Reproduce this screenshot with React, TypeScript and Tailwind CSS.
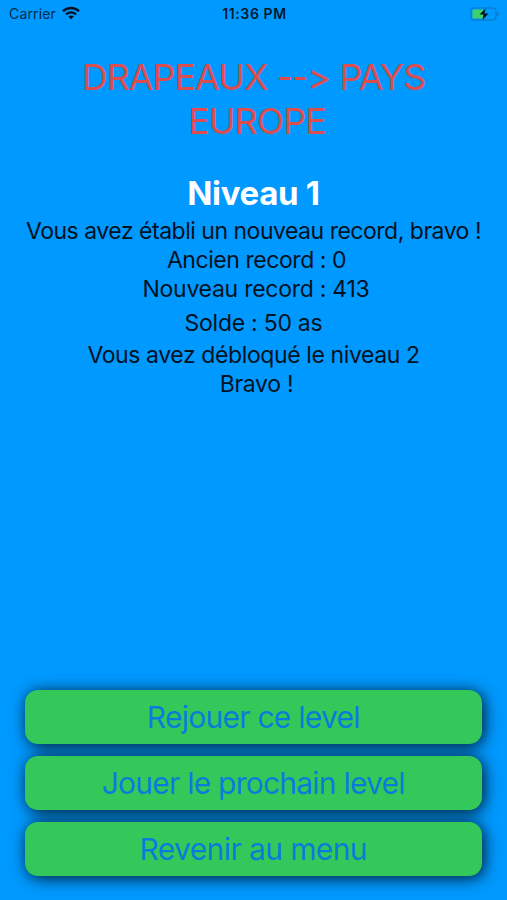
import React from 'react';

const recordLines = [
  { text: 'Vous avez établi un nouveau record, bravo !', className: 'h-[29px] tracking-[-0.49px]' },
  { text: 'Ancien record : 0', className: 'h-[29px] pl-[6px] tracking-[-0.44px]' },
  { text: 'Nouveau record : 413', className: 'h-[34px] pl-[5px] tracking-[-0.26px]' },
  { text: 'Solde : 50 as', className: 'h-[32px] tracking-[-0.26px]' },
  { text: 'Vous avez débloqué le niveau 2', className: 'h-[29px] tracking-[-0.4px]' },
  { text: 'Bravo !', className: 'h-[29px] pl-[6px] tracking-[-0.3px]' },
];

const actions = [
  { label: 'Rejouer ce level', className: 'tracking-[-0.75px]' },
  { label: 'Jouer le prochain level', className: 'tracking-[-0.77px]' },
  { label: 'Revenir au menu', className: 'tracking-[-0.6px]' },
];

const StatusBar: React.FC = () => (
  <header className="grid h-[27px] grid-cols-3 items-center pl-[9px] pr-[7px] text-[14px] text-[#032a48]">
    <div className="flex items-center gap-[6px]">
      <span className="tracking-[0.15px]">Carrier</span>
      <svg className="-mt-px h-[14px] w-[18px]" viewBox="0 0 18 14" fill="none" stroke="#00111f" aria-hidden="true">
        <path d="M1 5.2C5.4 0.9 12.6 0.9 17 5.2M4 8.3c2.8-2.7 7.2-2.7 10 0" strokeWidth="2.3" />
        <path d="M6.2 10.5c1.6-1.5 4-1.5 5.6 0L9 13.3z" fill="#00111f" stroke="none" />
      </svg>
    </div>
    <span className="text-center font-semibold tracking-[0.6px] text-[#001a30]">11:36 PM</span>
    <svg className="h-[14px] w-[30px] justify-self-end" viewBox="0 0 30 14" aria-hidden="true">
      <rect x="1" y="1" width="25" height="12" rx="3" fill="none" stroke="#0873bd" />
      <rect x="2.5" y="2.5" width="11" height="9" rx="1.2" fill="#3ed16b" />
      <path d="M27.5 5c2 .7 2 3.3 0 4z" fill="#0873bd" />
      <path d="M15.5 1.5 9.5 7.5h4l-1 5.5 6-6.5h-4z" fill="#00111f" />
    </svg>
  </header>
);

const App: React.FC = () => (
  <main className="flex h-[900px] w-full flex-col overflow-hidden bg-[#0099ff] font-[Inter,sans-serif]">
    <StatusBar />
    <h1 className="mt-[28px] text-center text-[36px] leading-[44px] tracking-[-1.05px] text-[#dc4d50]">
      DRAPEAUX --&gt; PAYS
      <span className="block pl-[7px]">EUROPE</span>
    </h1>
    <section className="mt-[30px] text-center text-[23px] leading-[29px] text-[#00111f]">
      <h2 className="mb-[4px] text-[33px] font-bold leading-[40px] tracking-[-0.3px] text-white">Niveau 1</h2>
      {recordLines.map(line => (
        <p key={line.text} className={line.className}>{line.text}</p>
      ))}
    </section>
    {/* One shadow for the whole stack keeps the green faces clean */}
    <nav className="mb-6 mt-auto flex flex-col gap-3 px-[25px] drop-shadow-[2px_2px_8px_rgba(0,0,0,0.85)]">
      {actions.map(action => (
        <button
          key={action.label}
          type="button"
          className={`h-[54px] rounded-[13px] bg-[#34c759] text-[30px] text-[#087bdd] ${action.className}`}
        >
          {action.label}
        </button>
      ))}
    </nav>
  </main>
);

export default App;
